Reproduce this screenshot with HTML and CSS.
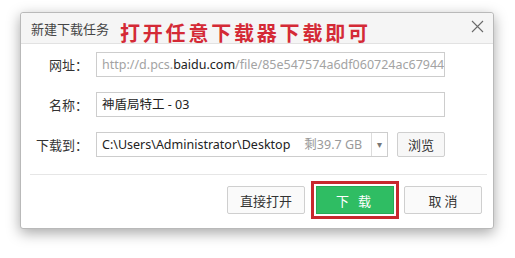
FILE: index.html
```html
<!DOCTYPE html>
<html lang="zh-CN">
<head>
  <meta charset="UTF-8">
  <title>新建下载任务</title>
  <link rel="stylesheet" href="styles.css">
</head>
<body>
  <div class="dialog">
    <div class="titlebar">
      <span class="title">新建下载任务</span>
      <span class="note">打开任意下载器下载即可</span>
      <span class="close">
        <svg width="13" height="13" viewBox="0 0 13 13"><path d="M1 1L12 12M12 1L1 12" stroke="#6a6a6a" stroke-width="1.1" fill="none"/></svg>
      </span>
    </div>

    <div class="form">
      <label class="label">网址：</label>
      <div class="field url">http://d.pcs.<b>baidu.com</b>/file/85e547574a6df060724ac679448a3e1b</div>

      <label class="label">名称：</label>
      <div class="field">神盾局特工 - 03</div>

      <label class="label">下载到：</label>
      <div class="path-row">
        <div class="field path">
          <span class="path-text">C:\Users\Administrator\Desktop</span>
          <span class="free">剩39.7 GB</span>
          <span class="drop">▾</span>
        </div>
        <button class="btn browse">浏览</button>
      </div>
    </div>

    <div class="sep"></div>

    <div class="actions">
      <button class="btn big">直接打开</button>
      <button class="btn big primary">下 载</button>
      <button class="btn big">取 消</button>
    </div>
  </div>
</body>
</html>
```

FILE: styles.css
```css
html, body {
  margin: 0;
  padding: 0;
  background: #fff;
  font-family: "Noto Sans", "Noto Sans CJK SC", sans-serif;
  color: #333;
}
body {
  width: 515px;
  height: 258px;
  overflow: hidden;
}
.dialog {
  margin: 12px 0 0 20px;
  width: 474px;
  height: 217px;
  box-sizing: border-box;
  background: #fff;
  border: 1px solid #b9b9b9;
  border-radius: 3px;
  box-shadow: 0 4px 14px rgba(0, 0, 0, 0.35);
  display: flex;
  flex-direction: column;
}
.titlebar {
  height: 31px;
  box-sizing: border-box;
  background: #f5f5f5;
  border-bottom: 1px solid #e2e2e2;
  border-radius: 3px 3px 0 0;
  display: flex;
  align-items: center;
  padding-left: 10px;
}
.title {
  font-family: "Noto Sans CJK SC", sans-serif;
  font-size: 13px;
  color: #454545;
}
.note {
  font-family: "Noto Sans CJK SC", sans-serif;
  font-weight: 700;
  font-size: 20px;
  letter-spacing: 2.8px;
  color: #d42a36;
  margin-left: 11px;
  margin-top: 10px;
  line-height: 20px;
}
.close {
  margin-left: auto;
  margin-right: 9px;
  margin-top: -4px;
  display: flex;
}
.form {
  display: grid;
  grid-template-columns: 67px 349px;
  column-gap: 8px;
  row-gap: 15px;
  padding-top: 8px;
  align-items: center;
}
.label {
  text-align: right;
  font-family: "Noto Sans CJK SC", sans-serif;
  font-size: 13px;
  color: #333;
}
.field {
  height: 25px;
  box-sizing: border-box;
  border: 1px solid #cdcdcd;
  padding: 0 5px;
  font-size: 12.5px;
  line-height: 23px;
  white-space: nowrap;
  overflow: hidden;
  color: #222;
  font-family: "Noto Sans", "Noto Sans CJK SC", sans-serif;
}
.url {
  color: #a3a3a3;
}
.url b {
  font-weight: 400;
  color: #222;
}
.path-row {
  display: flex;
  gap: 9px;
}
.path {
  width: 293px;
  display: flex;
  padding-right: 0;
}
.path-text {
  flex: 1;
}
.free {
  color: #9a9a9a;
  margin-right: 9px;
}
.drop {
  width: 15px;
  border-left: 1px solid #dcdcdc;
  text-align: center;
  color: #777;
  font-size: 10px;
}
.btn {
  font-family: "Noto Sans CJK SC", sans-serif;
  font-size: 13px;
  color: #333;
  background: #f7f7f7;
  border: 1px solid #cfcfcf;
  border-radius: 2px;
  padding: 0;
}
.browse {
  width: 48px;
  height: 25px;
}
.sep {
  height: 1px;
  background: #e6e6e6;
  margin: 17px 6px 0 9px;
}
.actions {
  display: flex;
  justify-content: flex-end;
  gap: 10px;
  padding: 11px 11px 0 0;
}
.big {
  width: 78px;
  height: 28px;
  background: #fafafa;
}
.primary {
  background: #2fbd63;
  border-color: #27a956;
  border-radius: 0;
  color: #fff;
  letter-spacing: 3px;
  margin-left: 1px;
  outline: 3px solid #c8282e;
  outline-offset: 2px;
}
```
